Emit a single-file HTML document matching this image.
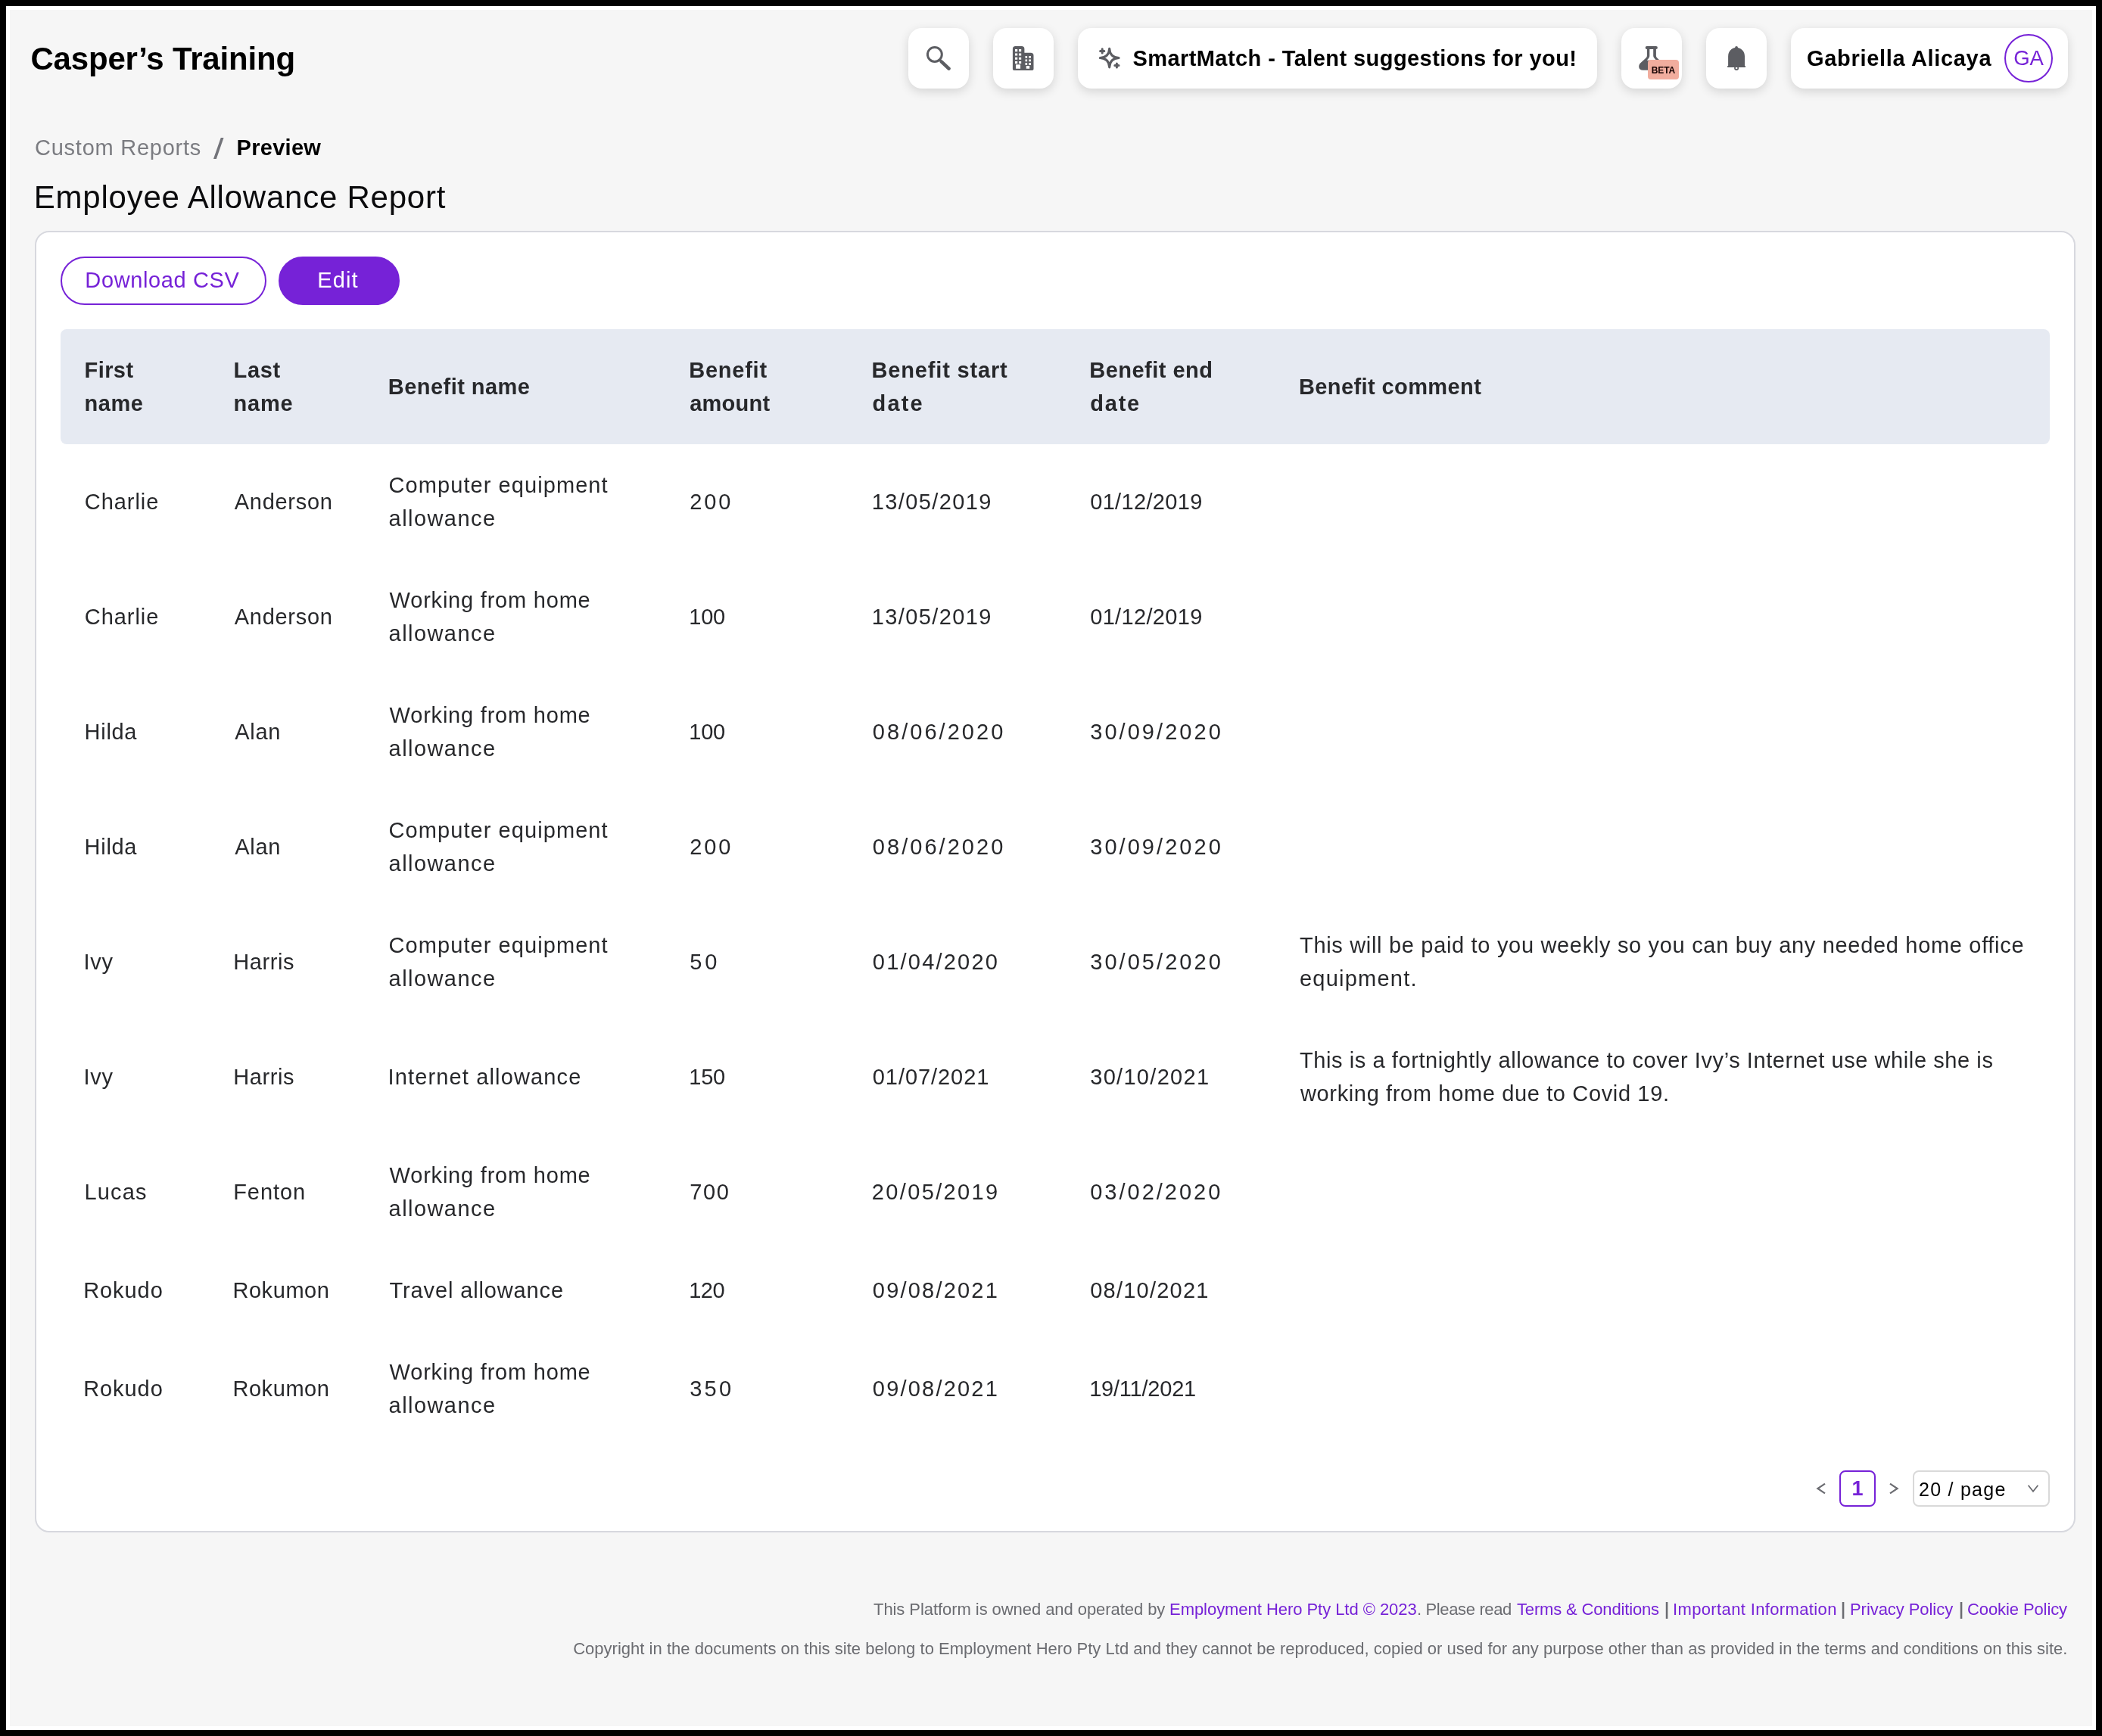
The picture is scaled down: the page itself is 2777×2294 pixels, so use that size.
<!DOCTYPE html>
<html lang="en">
<head>
<meta charset="utf-8">
<title>Employee Allowance Report - Preview</title>
<style>
*{box-sizing:border-box;margin:0;padding:0}
html,body{width:2777px;height:2294px;overflow:hidden;background:#000}
body{font-family:"Liberation Sans",sans-serif;color:#27282b;position:relative;will-change:transform}
.frame{position:absolute;left:8px;top:8px;width:2761px;height:2278px;background:#fff}
.page{position:absolute;left:13px;top:13px;width:2751px;height:2268px;background:#f6f6f6}
.abs{position:absolute;white-space:nowrap}
/* header */
.brand{left:40.4px;top:48px;font-size:42px;letter-spacing:-.17px;line-height:60px;font-weight:700;color:#000}
.hbtn{position:absolute;top:37px;height:80px;background:#fff;border-radius:18px;box-shadow:0 4px 14px rgba(0,0,0,.14)}
.hbtn svg{position:absolute}
.sm-text{position:absolute;left:72.4px;top:18px;font-size:29px;line-height:44px;font-weight:700;color:#000;white-space:nowrap;letter-spacing:.43px}
.user-name{position:absolute;left:21px;top:18px;font-size:29px;line-height:44px;font-weight:700;color:#000;white-space:nowrap;letter-spacing:.68px}
.avatar{position:absolute;left:282px;top:8px;width:64px;height:64px;border:2px solid #7622d7;border-radius:50%;color:#7622d7;font-size:27.5px;line-height:60px;text-align:center}
.beta{position:absolute;left:35.2px;top:42.4px;width:40.6px;height:25.4px;background:#f1ad9e;border-radius:4px;color:#140000;font-size:12px;font-weight:700;line-height:28.3px;text-align:center;letter-spacing:-.1px}
/* breadcrumb + title */
.bc{top:173px;font-size:29px;line-height:44px}
.bc1{left:46px;color:#7b7c81;letter-spacing:.75px}
.bc2{left:282px;top:175px;color:#73747a;font-size:38px;transform:scaleX(1.28);transform-origin:0 0}
.bc3{left:312.5px;color:#000;font-weight:700;letter-spacing:.3px}
.title{left:44.8px;top:231px;font-size:42px;line-height:60px;color:#0b0b0d;letter-spacing:.76px;font-weight:400}
/* card */
.card{position:absolute;left:46px;top:305px;width:2696px;height:1720px;background:#fff;border:2px solid #d7d8de;border-radius:19px}
.btn{position:absolute;top:32px;height:64px;border-radius:32px;font-size:29px;line-height:59px;text-align:center;border:2px solid #7622d7}
.btn-o{left:32px;width:272px;color:#7622d7;background:#fff;letter-spacing:.62px}
.btn-o span{margin-left:-3.2px}
.btn-p{left:320px;width:160px;color:#fff;background:#7622d7;letter-spacing:1.07px}
.btn-p span{margin-left:-3.2px}
table{position:absolute;left:32px;top:128px;width:2628px;border-collapse:separate;border-spacing:0;table-layout:fixed;font-size:29px;line-height:44px}
th,td{padding:32px 0 32px 32px;text-align:left;vertical-align:middle;white-space:nowrap}
th{background:#e6eaf2;font-weight:700;color:#27282b}
th:first-child{border-radius:8px 0 0 8px}
th:last-child{border-radius:0 8px 8px 0}
td{color:#27282b;font-weight:400}
/* pagination */
.pg{position:absolute;top:1636px;height:48px;font-size:27px;line-height:44px}
.pg1{left:2382px;width:48px;border:2px solid #7622d7;border-radius:8px;color:#7622d7;font-weight:700;text-align:center;background:#fff}
.pgsel{left:2478.5px;width:181.5px;border:2px solid #d9d9d9;border-radius:8px;color:#000;padding-left:6.5px;background:#fff;font-size:25px;letter-spacing:1.26px;line-height:46px}
/* footer */
.foot{right:46px;font-size:22px;line-height:32px;color:#6b6c71;text-align:right}
.foot a{color:#7622d7;text-decoration:none}
.foot1{position:absolute;left:0;top:2111px;width:2777px;height:32px;font-size:22px;line-height:32px;color:#6b6c71;white-space:nowrap}
.foot1 a,.foot1 span{position:absolute;top:0}
.foot1 a{color:#7622d7}
.foot1 .pipe{font-size:24px;top:-1px;transform:scaleX(1.3);transform-origin:0 0}
</style>
</head>
<body>
<div class="frame"></div>
<div class="page"></div>

<div class="abs brand" id="brand">Casper’s Training</div>


<div class="hbtn" style="left:1200px;width:80px">
<svg style="left:24px;top:24px" width="32" height="32" viewBox="0 0 32 32" fill="none" stroke="#5c5d62"><circle cx="10.85" cy="10.95" r="9.45" stroke-width="3"/><path d="M17 17.4L20 20.8" stroke-width="3"/><path d="M19.9 20.6L29.5 29.6" stroke-width="4.6" stroke-linecap="round"/></svg>
</div>
<div class="hbtn" style="left:1312px;width:80px">
<svg style="left:24px;top:24px" width="32" height="33" viewBox="0 0 32 33"><path fill="#5c5d62" fill-rule="evenodd" d="M5.6 0H13.7Q17.4 0 17.4 3.7V8.7H25.8Q29.5 8.7 29.5 12.4V30.3Q29.5 32.1 27.7 32.1H3.7Q1.9 32.1 1.9 30.3V3.7Q1.9 0 5.6 0Z M5 4.1h3.2v3.1H5z M10.1 4.1h3.1v3.1h-3.1z M5 9.4h3.2v3H5z M10.1 9.4h3.1v3h-3.1z M5 14.7h3.2v3H5z M10.1 14.7h3.1v3h-3.1z M5 19.9h3.2v3H5z M10.1 19.9h3.1v3h-3.1z M6.1 24.3h6v5.5h-6z M18.5 13h2.6v2.7h-2.6z M23.3 13h2.6v2.7h-2.6z M18.5 17.6h2.6v2.7h-2.6z M23.3 17.6h2.6v2.7h-2.6z M18.5 22.1h2.6v2.8h-2.6z M23.3 22.1h2.6v2.8h-2.6z M19.8 26.1h4.4v3.7h-4.4z"/></svg>
</div>
<div class="hbtn" style="left:1424px;width:686px">
<svg style="left:24px;top:22px" width="36" height="36" viewBox="0 0 36 36" fill="none" stroke="#5c5d62" stroke-width="3" stroke-linecap="round" stroke-linejoin="round"><path d="M17.7 5.2Q18.3 17 30.1 17.6Q18.3 18.2 17.7 30Q17.1 18.2 5.3 17.6Q17.1 17 17.7 5.2Z"/><path d="M8.2 5.8v5.2M5.6 8.4h5.2M27.4 24.9v5.2M24.8 27.5h5.2"/></svg>
<div class="sm-text" id="smtext">SmartMatch - Talent suggestions for you!</div>
</div>
<div class="hbtn" style="left:2142px;width:80px">
<svg style="left:20px;top:22px" width="40" height="36" viewBox="20 22 40 36" fill="#5c5d62"><rect x="31.7" y="24" width="16.2" height="3.9" rx="1.95"/><path fill-rule="evenodd" d="M33.9 26V36.4C33.9 38.5 32.5 39.5 31 41L25 46.5C22 49.5 22.5 55.8 28.5 55.8H51.3C57.3 55.8 57.8 49.5 54.8 46.5L48.8 41C47.3 39.5 45.9 38.5 45.9 36.4V26Z M37.3 27.5V36.8C37.3 39 36 40 34.8 41.5L33.7 42.7H46.1L45 41.5C43.8 40 42.2 39 42.2 36.8V27.5Z"/></svg>
<div class="beta"><span id="beta">BETA</span></div>
</div>
<div class="hbtn" style="left:2254px;width:80px">
<svg style="left:24px;top:22px" width="32" height="36" viewBox="24 22 32 36"><path fill="#5c5d62" d="M40.05 24Q41.9 24 42 26.1C47.5 27.5 51 31.5 51 37.5V50H51.2Q52.15 50 52.15 50.95Q52.15 51.9 51.2 51.9H28.9Q27.95 51.9 27.95 50.95Q27.95 50 28.9 50H29.1V37.5C29.1 31.5 32.6 27.5 38.1 26.1Q38.2 24 40.05 24Z"/><circle cx="40.1" cy="52.9" r="2.15" fill="none" stroke="#5c5d62" stroke-width="1.7"/></svg>
</div>
<div class="hbtn" style="left:2366px;width:366px">
<div class="user-name" id="uname">Gabriella Alicaya</div>
<div class="avatar"><span id="ga">GA</span></div>
</div>


<div class="abs bc bc1" id="bc1">Custom Reports</div>
<div class="abs bc bc2" id="bc2">/</div>
<div class="abs bc bc3" id="bc3">Preview</div>
<h1 class="abs title" id="title">Employee Allowance Report</h1>

<div class="card">
<div class="btn btn-o"><span id="dl">Download CSV</span></div>
<div class="btn btn-p"><span id="edit">Edit</span></div>
<table>
<colgroup><col style="width:197px"><col style="width:204px"><col style="width:398px"><col style="width:242px"><col style="width:287px"><col style="width:276px"><col style="width:1024px"></colgroup>
<thead><tr><th><span style="letter-spacing:0.40px;margin-left:-0.4px">First</span><br><span style="letter-spacing:0.47px;margin-left:-0.4px">name</span></th><th><span style="letter-spacing:0.60px;margin-left:-0.4px">Last</span><br><span style="letter-spacing:0.73px;margin-left:-0.4px">name</span></th><th><span style="letter-spacing:0.45px;margin-left:-0.2px">Benefit name</span></th><th><span style="letter-spacing:0.77px;margin-left:-0.8px">Benefit</span><br><span style="letter-spacing:0.24px;margin-left:0.2px">amount</span></th><th><span style="letter-spacing:0.82px;margin-left:-1.4px">Benefit start</span><br><span style="letter-spacing:2.13px;margin-left:-0.4px">date</span></th><th><span style="letter-spacing:0.48px;margin-left:-0.8px">Benefit end</span><br><span style="letter-spacing:1.80px;margin-left:0.2px">date</span></th><th><span style="letter-spacing:0.40px">Benefit comment</span></th></tr></thead>
<tbody>
<tr><td><span style="letter-spacing:0.94px;margin-left:-0.2px">Charlie</span></td><td><span style="letter-spacing:0.71px;margin-left:0.8px">Anderson</span></td><td><span style="letter-spacing:1.07px;margin-left:0.6px">Computer equipment</span><br><span style="letter-spacing:1.43px;margin-left:0.6px">allowance</span></td><td><span style="letter-spacing:2.90px;margin-left:0.2px">200</span></td><td><span style="letter-spacing:1.38px;margin-left:-1.2px">13/05/2019</span></td><td><span style="letter-spacing:0.33px;margin-left:0.2px">01/12/2019</span></td><td></td></tr>
<tr><td><span style="letter-spacing:0.94px;margin-left:-0.2px">Charlie</span></td><td><span style="letter-spacing:0.71px;margin-left:0.8px">Anderson</span></td><td><span style="letter-spacing:0.79px;margin-left:1.6px">Working from home</span><br><span style="letter-spacing:1.43px;margin-left:0.6px">allowance</span></td><td><span style="letter-spacing:-0.20px;margin-left:-0.8px">100</span></td><td><span style="letter-spacing:1.38px;margin-left:-1.2px">13/05/2019</span></td><td><span style="letter-spacing:0.33px;margin-left:0.2px">01/12/2019</span></td><td></td></tr>
<tr><td><span style="letter-spacing:0.70px;margin-left:-0.4px">Hilda</span></td><td><span style="letter-spacing:0.73px;margin-left:1.2px">Alan</span></td><td><span style="letter-spacing:0.79px;margin-left:1.6px">Working from home</span><br><span style="letter-spacing:1.43px;margin-left:0.6px">allowance</span></td><td><span style="letter-spacing:-0.20px;margin-left:-0.8px">100</span></td><td><span style="letter-spacing:3.04px;margin-left:-0.2px">08/06/2020</span></td><td><span style="letter-spacing:3.06px;margin-left:0.2px">30/09/2020</span></td><td></td></tr>
<tr><td><span style="letter-spacing:0.70px;margin-left:-0.4px">Hilda</span></td><td><span style="letter-spacing:0.73px;margin-left:1.2px">Alan</span></td><td><span style="letter-spacing:1.07px;margin-left:0.6px">Computer equipment</span><br><span style="letter-spacing:1.43px;margin-left:0.6px">allowance</span></td><td><span style="letter-spacing:2.90px;margin-left:0.2px">200</span></td><td><span style="letter-spacing:3.04px;margin-left:-0.2px">08/06/2020</span></td><td><span style="letter-spacing:3.06px;margin-left:0.2px">30/09/2020</span></td><td></td></tr>
<tr><td><span style="letter-spacing:0.70px;margin-left:-1.4px">Ivy</span></td><td><span style="letter-spacing:0.60px;margin-left:-0.8px">Harris</span></td><td><span style="letter-spacing:1.07px;margin-left:0.6px">Computer equipment</span><br><span style="letter-spacing:1.43px;margin-left:0.6px">allowance</span></td><td><span style="letter-spacing:4.00px;margin-left:0.2px">50</span></td><td><span style="letter-spacing:2.22px;margin-left:-0.2px">01/04/2020</span></td><td><span style="letter-spacing:3.06px;margin-left:0.2px">30/05/2020</span></td><td><span style="letter-spacing:0.68px;margin-left:1.0px">This will be paid to you weekly so you can buy any needed home office</span><br><span style="letter-spacing:1.22px;margin-left:1.0px">equipment.</span></td></tr>
<tr><td><span style="letter-spacing:0.70px;margin-left:-1.4px">Ivy</span></td><td><span style="letter-spacing:0.60px;margin-left:-0.8px">Harris</span></td><td><span style="letter-spacing:1.14px;margin-left:-0.4px">Internet allowance</span></td><td><span style="letter-spacing:-0.20px;margin-left:-0.8px">150</span></td><td><span style="letter-spacing:0.93px;margin-left:-0.2px">01/07/2021</span></td><td><span style="letter-spacing:1.31px;margin-left:0.2px">30/10/2021</span></td><td><span style="letter-spacing:0.58px;margin-left:1.0px">This is a fortnightly allowance to cover Ivy’s Internet use while she is</span><br><span style="letter-spacing:0.64px;margin-left:2.0px">working from home due to Covid 19.</span></td></tr>
<tr><td><span style="letter-spacing:1.10px;margin-left:-0.4px">Lucas</span></td><td><span style="letter-spacing:0.92px;margin-left:-0.8px">Fenton</span></td><td><span style="letter-spacing:0.79px;margin-left:1.6px">Working from home</span><br><span style="letter-spacing:1.43px;margin-left:0.6px">allowance</span></td><td><span style="letter-spacing:1.70px;margin-left:0.2px">700</span></td><td><span style="letter-spacing:2.36px;margin-left:-1.2px">20/05/2019</span></td><td><span style="letter-spacing:3.00px;margin-left:0.2px">03/02/2020</span></td><td></td></tr>
<tr><td><span style="letter-spacing:0.92px;margin-left:-1.8px">Rokudo</span></td><td><span style="letter-spacing:0.57px;margin-left:-1.6px">Rokumon</span></td><td><span style="letter-spacing:0.86px;margin-left:1.6px">Travel allowance</span></td><td><span style="letter-spacing:-0.50px;margin-left:-0.8px">120</span></td><td><span style="letter-spacing:2.20px;margin-left:-0.2px">09/08/2021</span></td><td><span style="letter-spacing:1.24px;margin-left:0.2px">08/10/2021</span></td><td></td></tr>
<tr><td><span style="letter-spacing:0.92px;margin-left:-1.8px">Rokudo</span></td><td><span style="letter-spacing:0.57px;margin-left:-1.6px">Rokumon</span></td><td><span style="letter-spacing:0.79px;margin-left:1.6px">Working from home</span><br><span style="letter-spacing:1.43px;margin-left:0.6px">allowance</span></td><td><span style="letter-spacing:3.30px;margin-left:0.2px">350</span></td><td><span style="letter-spacing:2.20px;margin-left:-0.2px">09/08/2021</span></td><td><span style="letter-spacing:-0.22px;margin-left:-0.8px">19/11/2021</span></td><td></td></tr>
</tbody></table>
<svg class="pg" style="left:2350px;top:1651px;height:18px" width="16" height="18" viewBox="0 0 16 18" fill="none" stroke="#6c6d72" stroke-width="2.2"><path d="M13 2.6L3.4 9L13 15.4"/></svg>
<div class="pg pg1"><span id="pg1">1</span></div>
<svg class="pg" style="left:2446px;top:1651px;height:18px" width="16" height="18" viewBox="0 0 16 18" fill="none" stroke="#6c6d72" stroke-width="2.2"><path d="M3 2.6L12.6 9L3 15.4"/></svg>
<div class="pg pgsel"><span id="pgsel">20 / page</span><svg style="position:absolute;left:148px;top:15px" width="18" height="14" viewBox="0 0 18 14" fill="none" stroke="#6c6d72" stroke-width="1.8"><path d="M2.6 2.8L9 10.8L15.4 2.8"/></svg></div>
</div>

<div class="foot1" id="f1"><span id="fs1" style="left:1154.0px;letter-spacing:-0.063px">This Platform is owned and operated by</span><a id="fa1" style="left:1545.0px;letter-spacing:-0.045px">Employment Hero Pty Ltd © 2023</a><span id="fs2" style="left:1872.0px;letter-spacing:-0.357px">. Please read</span><a id="fa2" style="left:2004.0px;letter-spacing:-0.156px">Terms &amp; Conditions</a><span id="fp1" class="pipe" style="left:2198.0px;letter-spacing:0.000px">|</span><a id="fa3" style="left:2210.0px;letter-spacing:0.365px">Important Information</a><span id="fp2" class="pipe" style="left:2431.0px;letter-spacing:0.000px">|</span><a id="fa4" style="left:2444.0px;letter-spacing:-0.060px">Privacy Policy</a><span id="fp3" class="pipe" style="left:2587.0px;letter-spacing:0.000px">|</span><a id="fa5" style="left:2599.0px;letter-spacing:-0.098px">Cookie Policy</a></div>
<div class="abs foot" id="f2" style="top:2163px;letter-spacing:.021px;right:45.5px">Copyright in the documents on this site belong to Employment Hero Pty Ltd and they cannot be reproduced, copied or used for any purpose other than as provided in the terms and conditions on this site.</div>
</body>
</html>
